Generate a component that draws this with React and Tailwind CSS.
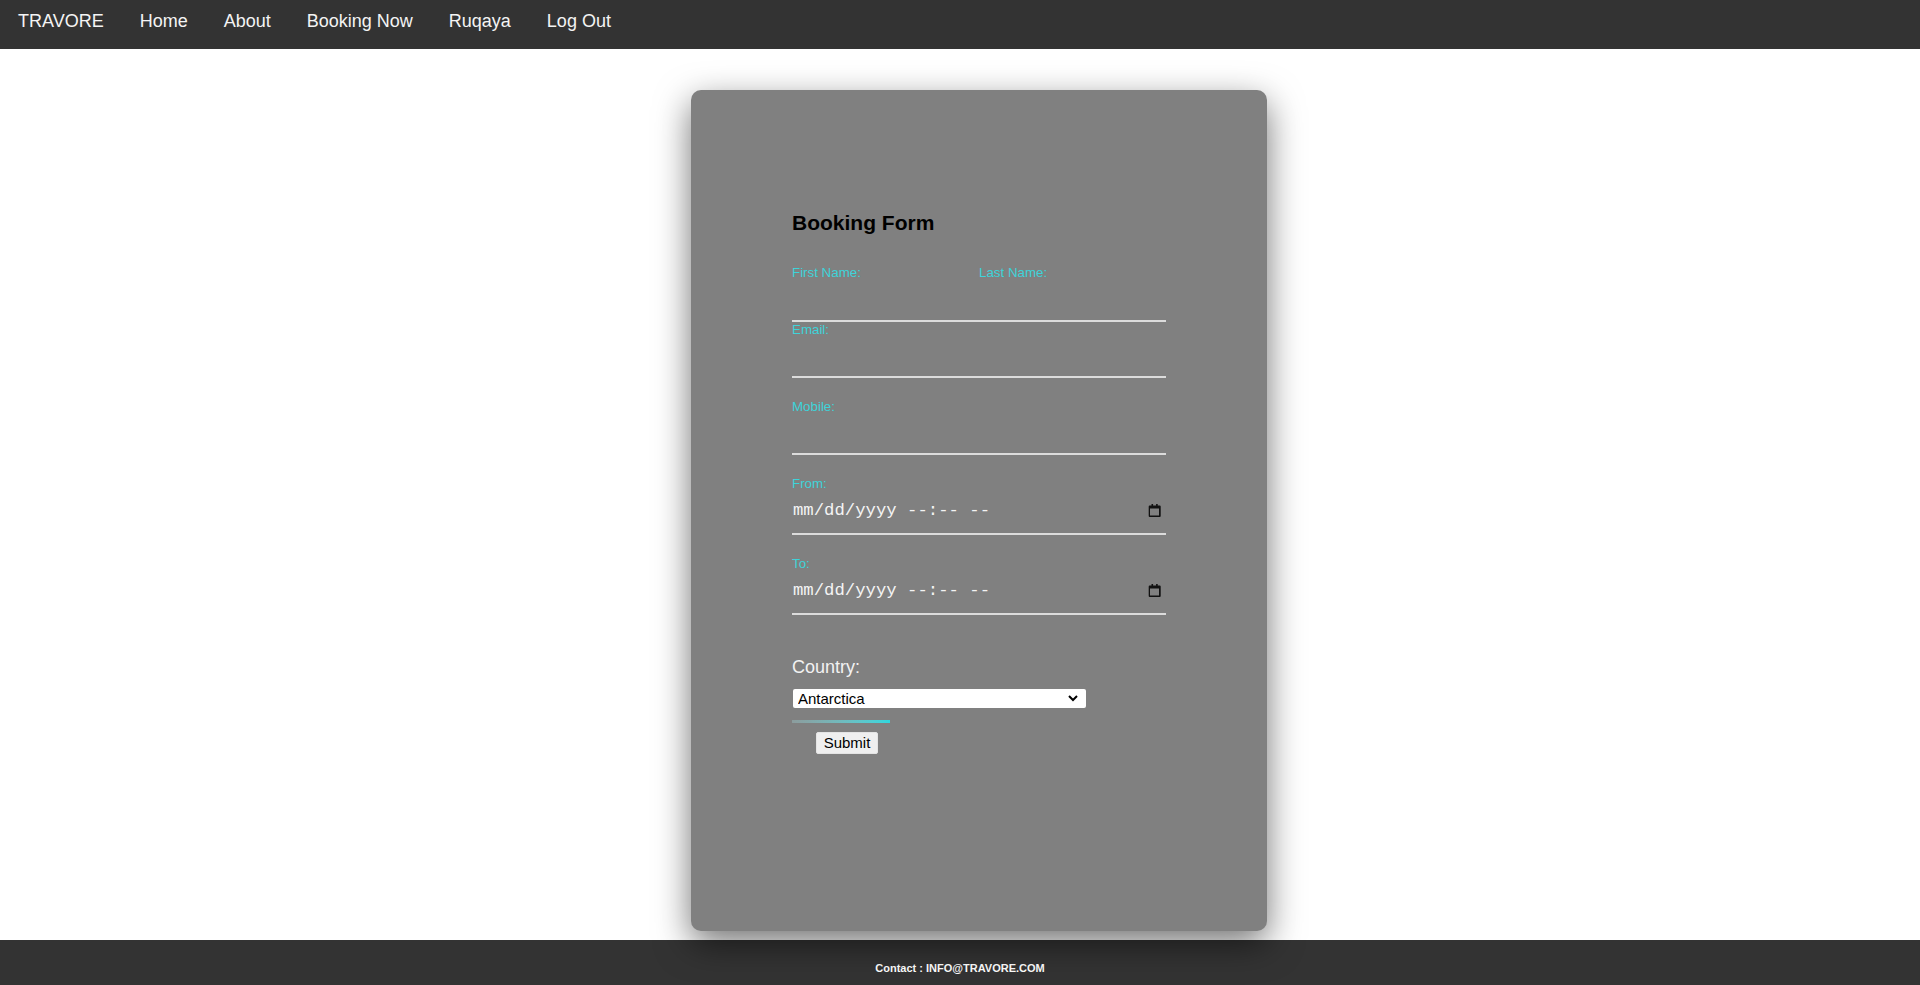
import { useState } from 'react';

const NAV_LINKS = ['TRAVORE', 'Home', 'About', 'Booking Now', 'Ruqaya', 'Log Out'];

const LABEL = 'block h-[16px] text-[13.33px] leading-[16px] text-[#3ed3d9]';

function CalendarIcon() {
  return (
    <svg width="15" height="15" viewBox="0 0 15 15" fill="#111">
      <path d="M2.5 2.5h2V1h1.6v1.5h3V1h1.6v1.5h2a1 1 0 0 1 1 1V13a1 1 0 0 1-1 1h-10a1 1 0 0 1-1-1V3.5a1 1 0 0 1 1-1zM3 5.5V12.5h9V5.5z" />
    </svg>
  );
}

function DateField({ label }) {
  return (
    <div className="mt-[21px]">
      <label className={LABEL}>{label}</label>
      <div className="flex h-[43px] items-center justify-between border-b-2 border-[#dcdcdc] pb-[4px] pr-[4px]">
        <span className="whitespace-pre pl-[1px] font-['Liberation_Mono',monospace] text-[17.3px] text-[#f4f4f4]">
          mm/dd/yyyy --:-- --
        </span>
        <CalendarIcon />
      </div>
    </div>
  );
}

export default function App() {
  const [country, setCountry] = useState('Antarctica');

  return (
    <div className="flex min-h-screen flex-col bg-white font-['Liberation_Sans',Arial,sans-serif]">
      {/* Nav */}
      <nav className="flex h-[49px] flex-none items-start bg-[#333333] pt-[11px]">
        {NAV_LINKS.map((l) => (
          <a key={l} href="#" className="px-[18px] text-[18px] leading-[21px] text-[#f4f4f4]">
            {l}
          </a>
        ))}
      </nav>

      {/* Main */}
      <main className="flex flex-1 justify-center pl-[38px] pt-[41px]">
        <div className="relative z-10 h-[841px] w-[576px] rounded-[10px] bg-[#808080] pl-[101px] pt-[121px] shadow-[0_12px_35px_rgba(0,0,0,0.55)]">
          <form className="w-[374px]" onSubmit={(e) => e.preventDefault()}>
            <h3 className="h-[24px] text-[21px] font-bold leading-[24px] text-black">Booking Form</h3>

            <div className="mt-[30px] flex">
              <div className="w-1/2">
                <label className={LABEL}>First Name:</label>
                <input className="h-[41px] w-full border-b-2 border-[#dcdcdc] bg-transparent outline-none" />
              </div>
              <div className="w-1/2">
                <label className={LABEL}>Last Name:</label>
                <input className="h-[41px] w-full border-b-2 border-[#dcdcdc] bg-transparent outline-none" />
              </div>
            </div>

            <div>
              <label className={LABEL}>Email:</label>
              <input className="h-[40px] w-full border-b-2 border-[#dcdcdc] bg-transparent outline-none" />
            </div>

            <div className="mt-[21px]">
              <label className={LABEL}>Mobile:</label>
              <input className="h-[40px] w-full border-b-2 border-[#dcdcdc] bg-transparent outline-none" />
            </div>

            <DateField label="From:" />
            <DateField label="To:" />

            <div className="mt-[42px] h-[21px] text-[18px] leading-[21px] text-[#f2f2f2]">Country:</div>
            <div className="relative ml-[1px] mt-[11px] h-[19px] w-[293px]">
              <select
                value={country}
                onChange={(e) => setCountry(e.target.value)}
                className="block h-[19px] w-full appearance-none rounded-[2px] bg-white py-0 pl-[5px] text-[15px] leading-[19px] text-black outline-none"
              >
                <option>Afghanistan</option>
                <option>Antarctica</option>
                <option>Australia</option>
              </select>
              <svg className="pointer-events-none absolute right-[8px] top-[6px]" width="10" height="7" viewBox="0 0 10 7">
                <path d="M1 1l4 4 4-4" fill="none" stroke="#000" strokeWidth="2" />
              </svg>
            </div>
            <div className="mt-[12px] h-[3px] w-[98px] bg-gradient-to-r from-[#8c9c9d] to-[#2cd8de]" />
            <button
              type="submit"
              className="ml-[24px] mt-[9px] block h-[22px] w-[62px] rounded-[2px] border border-[#e4e4e4] bg-[#efefef] text-[15px] leading-[20px] text-black"
            >
              Submit
            </button>
          </form>
        </div>
      </main>

      {/* Footer */}
      <footer className="mt-[9px] h-[45px] flex-none bg-[#333333] pt-[22px] text-center text-[11px] font-bold leading-[13px] text-white">
        Contact : INFO@TRAVORE.COM
      </footer>
    </div>
  );
}
